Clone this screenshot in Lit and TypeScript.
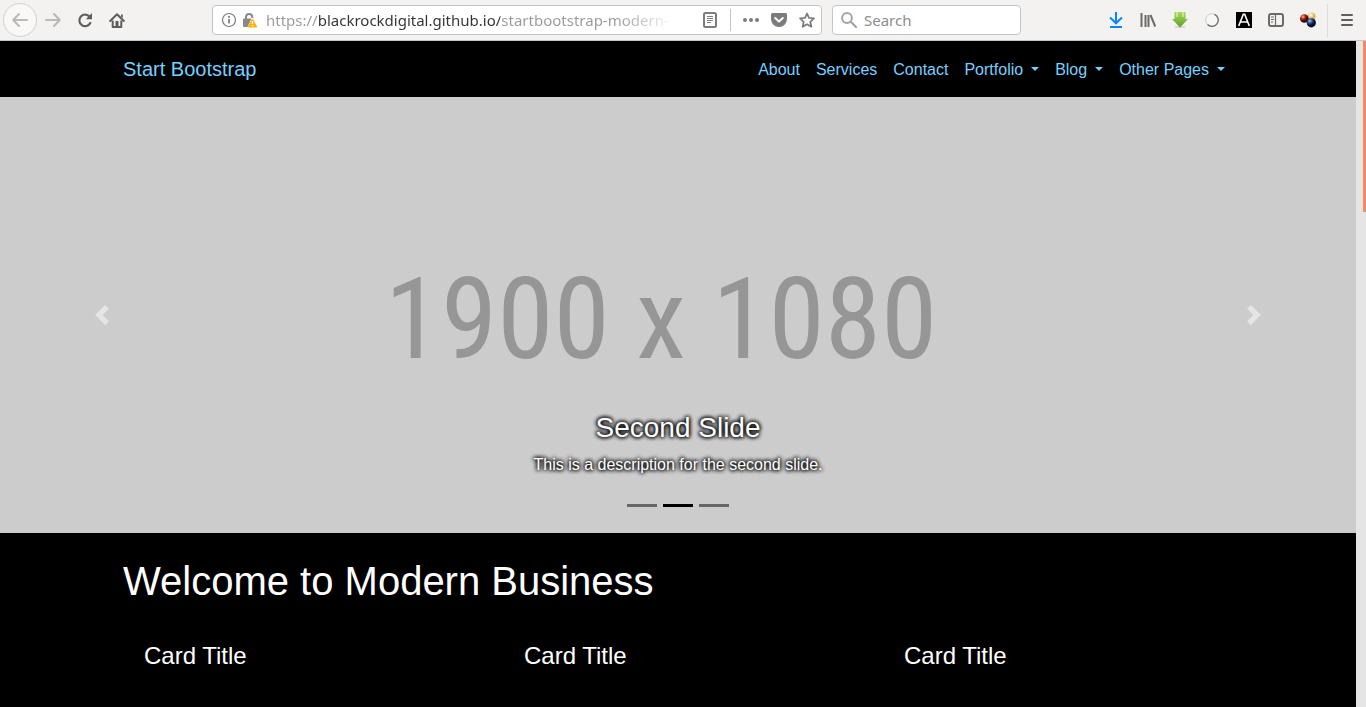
import { LitElement, html, svg, css } from "lit";
import { customElement, state } from "lit/decorators.js";

const icon = (body: unknown, size = 16) => html`
  <svg width=${size} height=${size} viewBox="0 0 ${size} ${size}" fill="none" aria-hidden="true">${body}</svg>
`;

const icons = {
  back: icon(svg`<path d="M15 8H1.5M7 2 1.2 8 7 14" stroke="#bbb9b7" stroke-width="2" stroke-linecap="round" stroke-linejoin="round"/>`),
  forward: icon(svg`<path d="M1 8h13.500M9 2l5.800 6L9 14" stroke="#bbb9b7" stroke-width="2" stroke-linecap="round" stroke-linejoin="round"/>`),
  reload: icon(svg`<path d="M12.600 4.600A5.800 5.800 0 1 0 13.300 11" stroke="#5f5e5d" stroke-width="2.200" stroke-linecap="round"/><path d="M15 1v6.200H8.800z" fill="#5f5e5d"/>`),
  home: icon(svg`<path d="M1.200 9 8 2.200 14.800 9" stroke="#5f5e5d" stroke-width="2" stroke-linecap="round" stroke-linejoin="round"/><path d="M12 2.500h1.800V6L12 4.500z" fill="#5f5e5d"/><path d="M3.700 8.500V15h8.600V8.500" stroke="#5f5e5d" stroke-width="2" stroke-linejoin="round"/><path d="M6.500 14V9h3v5z" fill="#5f5e5d"/>`),
  info: icon(svg`<circle cx="8" cy="8" r="6.500" stroke="#7d7c7b" stroke-width="1.200"/><path d="M8 7v4.500" stroke="#7d7c7b" stroke-width="1.700"/><circle cx="8" cy="4.800" r="1.100" fill="#7d7c7b"/>`),
  lock: icon(svg`<path d="M4 7V4.600a3.200 3.200 0 0 1 6.300 0V6" stroke="#8a8988" stroke-width="2"/><path d="M2 6.500h7.500L5.500 15H2a1 1 0 0 1-1-1V7.500a1 1 0 0 1 1-1z" fill="#8a8988"/><path d="M10.500 7 14.800 15H6.200z" fill="#ffb300" stroke="#ffb300" stroke-width="1" stroke-linejoin="round"/><path d="M10.500 9v3M10.500 13v1.300" stroke="#fff" stroke-width="1.400"/>`),
  reader: icon(svg`<rect x="2" y="1" width="12" height="14" rx="1.500" stroke="#7d7c7b" stroke-width="2"/><path d="M5 4.500h6M5 6.500h6M5 8.500h6M5 10.500h4" stroke="#7d7c7b"/>`),
  dots: icon(svg`<g fill="#7d7c7b"><circle cx="2" cy="8" r="2"/><circle cx="8" cy="8" r="2"/><circle cx="14" cy="8" r="2"/></g>`),
  pocket: icon(svg`<path d="M1.500 1h13A1.500 1.500 0 0 1 16 2.500V7A8 8 0 0 1 0 7V2.500A1.500 1.500 0 0 1 1.500 1z" fill="#7d7c7b"/><path d="M4.200 6 8 9.600 11.800 6" stroke="#fff" stroke-width="2" stroke-linecap="round" stroke-linejoin="round"/>`),
  star: icon(svg`<path d="m8 1.500 2 4.400 4.900.5-3.600 3.400 1 4.900L8 12.300l-4.300 2.400 1-4.900L1.100 6.400 6 5.900z" stroke="#7d7c7b" stroke-width="1.800" stroke-linejoin="round"/>`),
  search: icon(svg`<circle cx="6" cy="6" r="4.900" stroke="#a5a4a3" stroke-width="2"/><path d="m9.800 9.800 5.200 5.200" stroke="#a5a4a3" stroke-width="2.200" stroke-linecap="round"/>`),
  download: icon(svg`<path d="M8 1v10M2.800 6.200 8 11.300l5.200-5.100M3 15h10" stroke="#0a84ff" stroke-width="2" stroke-linecap="square"/>`),
  library: icon(svg`<path d="M1.500 1v14M5.500 3v12M8.500 3v12M10.500 3l4.700 11.500" stroke="#6c6b6a" stroke-width="2"/>`),
  save: icon(svg`
    <defs><linearGradient id="sg" x2="0" y2="1"><stop offset="0" stop-color="#a9dc55"/><stop offset="1" stop-color="#5c9f2a"/></linearGradient></defs>
    <ellipse cx="8" cy="15" rx="6" ry="1" fill="#d6d6d2"/>
    <path d="M2.500 0h2v5h1V0h5v5h1V0h2v7H16l-8 8.500L0 7h2.500z" fill="url(#sg)"/>`),
  ring: icon(svg`<circle cx="8" cy="8" r="6.300" fill="#f7f7f6" stroke="#cfcecd" stroke-width="1"/><path d="M10.500 2.300a6.300 6.300 0 1 1-7 10.200" stroke="#6e6d6c" stroke-width="1.300"/>`),
  letter: icon(svg`<rect width="16" height="16" fill="#000"/><path d="M2.700 14 7.300 2.300h1.400L13.300 14M4.500 10h7" stroke="#fff" stroke-width="1.600"/>`),
  sidebar: icon(svg`<rect x="1" y="2" width="14" height="12" rx="2" stroke="#6c6b6a" stroke-width="2"/><path d="M7.500 2v12" stroke="#6c6b6a" stroke-width="1.200"/><path d="M3 5h3M3 7.500h3M3 10h2" stroke="#6c6b6a"/>`),
  balls: icon(svg`
    <defs>
      <radialGradient id="ry" cx=".4" cy=".3"><stop offset="0" stop-color="#fffbe0"/><stop offset="1" stop-color="#d8b24a"/></radialGradient>
      <radialGradient id="rr" cx=".35" cy=".3"><stop offset="0" stop-color="#ffb0a0"/><stop offset=".5" stop-color="#b8301c"/><stop offset="1" stop-color="#3c0803"/></radialGradient>
      <radialGradient id="rb" cx=".35" cy=".3"><stop offset="0" stop-color="#a8c0f4"/><stop offset=".5" stop-color="#2c4c9c"/><stop offset="1" stop-color="#050a24"/></radialGradient>
    </defs>
    <circle cx="11.500" cy="4.500" r="4" fill="url(#ry)"/><circle cx="4.300" cy="6.500" r="4.300" fill="url(#rr)"/><circle cx="11.300" cy="10.800" r="4.600" fill="url(#rb)"/>`),
  menu: icon(svg`<path d="M3 3h10M3 8h10M3 13h10" stroke="#5f5e5d" stroke-width="2" stroke-linecap="round"/>`),
};

@customElement("browser-toolbar")
class BrowserToolbar extends LitElement {
  static styles = css`
    :host {
      display: flex;
      align-items: center;
      flex: none;
      box-sizing: border-box;
      height: 41px;
      padding: 0 3px;
      background: #f3f2f0;
      border-bottom: 1px solid #c9c7c3;
    }
    button {
      display: flex;
      align-items: center;
      justify-content: center;
      flex: none;
      width: 32px;
      height: 32px;
      padding: 0;
      border: 0;
      background: none;
    }
    svg { display: block; flex: none; }
    .back {
      width: 34px;
      height: 34px;
      border: 1px solid #d2d0cd;
      border-radius: 50%;
      background: #f9f8f7;
    }
    .spacer { flex: 79 79 79px; }
    .field {
      display: flex;
      align-items: center;
      box-sizing: border-box;
      height: 30px;
      min-width: 0;
      border: 1px solid #c8c5c1;
      border-radius: 4px;
      background: #fff;
    }
    .address { flex: 610 610 610px; padding-left: 8px; }
    .address button { width: 28px; height: 28px; }
    .address .identity { width: 16px; margin-right: 5px; }
    .lookup { flex: 189 189 189px; margin-left: 10px; padding: 0 8px; gap: 7px; }
    input {
      flex: 1;
      min-width: 0;
      height: 26px;
      padding: 0;
      border: 0;
      outline: 0;
      background: none;
      font: 15px/20px "Noto Sans", "Open Sans", sans-serif;
      color: #8e8d8c;
    }
    input::placeholder { color: #8e8d8c; opacity: 1; }
    .url {
      margin: 0 16px 0 3px;
      background: linear-gradient(to right, #999 52px, #333 52px 234px, #999 234px 350px, #9990 410px);
      background-clip: text;
      -webkit-background-clip: text;
      color: transparent;
    }
    .rule { width: 1px; height: 22px; margin: 0 6px; background: #c8c5c1; }
    .divider { width: 1px; height: 33px; margin: 0 3px; background: #dddbd8; }
  `;

  render() {
    const tools: [string, unknown][] = [
      ["Downloads", icons.download],
      ["Library", icons.library],
      ["Save page", icons.save],
      ["Status", icons.ring],
      ["Fonts", icons.letter],
      ["Sidebars", icons.sidebar],
      ["Colours", icons.balls],
    ];
    return html`
      <button class="back" aria-label="Back">${icons.back}</button>
      <button aria-label="Forward">${icons.forward}</button>
      <button aria-label="Reload">${icons.reload}</button>
      <button aria-label="Home">${icons.home}</button>
      <div class="spacer"></div>
      <div class="field address">
        <button class="identity" aria-label="Site information">${icons.info}</button>
        <button class="identity" aria-label="Connection">${icons.lock}</button>
        <input class="url" aria-label="Address" value="https://blackrockdigital.github.io/startbootstrap-modern-" />
        <button aria-label="Reader view">${icons.reader}</button>
        <div class="rule"></div>
        <button aria-label="Page actions">${icons.dots}</button>
        <button aria-label="Save to Pocket">${icons.pocket}</button>
        <button aria-label="Bookmark">${icons.star}</button>
      </div>
      <div class="field lookup">
        ${icons.search}
        <input aria-label="Search" placeholder="Search" />
      </div>
      <div class="spacer"></div>
      ${tools.map(([label, glyph]) => html`<button aria-label=${label}>${glyph}</button>`)}
      <div class="divider"></div>
      <button aria-label="Menu">${icons.menu}</button>
    `;
  }
}

@customElement("site-header")
class SiteHeader extends LitElement {
  static styles = css`
    :host { display: block; background: #000; }
    .container {
      display: flex;
      align-items: center;
      justify-content: space-between;
      box-sizing: border-box;
      max-width: 1140px;
      min-height: 56px;
      margin: 0 auto;
      padding: 0 15px;
    }
    a { color: #76d0ff; text-decoration: none; }
    .brand { font-size: 20px; line-height: 30px; }
    .links { display: flex; }
    .links a { padding: 9px 8px 7px; line-height: 24px; }
    .caret {
      display: inline-block;
      margin-left: 8px;
      vertical-align: 4px;
      border: 4px solid transparent;
      border-top-color: currentColor;
      border-bottom: 0;
    }
  `;

  render() {
    const links: [string, boolean][] = [
      ["About", false],
      ["Services", false],
      ["Contact", false],
      ["Portfolio", true],
      ["Blog", true],
      ["Other Pages", true],
    ];
    return html`
      <div class="container">
        <a class="brand" href="#">Start Bootstrap</a>
        <nav class="links">
          ${links.map(([label, menu]) => html`<a href="#">${label}${menu ? html`<span class="caret"></span>` : ""}</a>`)}
        </nav>
      </div>
    `;
  }
}

@customElement("slide-show")
class SlideShow extends LitElement {
  @state() private active = 1;

  static styles = css`
    :host { display: block; position: relative; background: #ccc; }
    .picture {
      display: flex;
      align-items: center;
      justify-content: center;
      box-sizing: border-box;
      height: 436px;
      padding: 8px 34px 0 0;
      color: #969696;
      font: 114px/1 "Roboto Condensed", "Liberation Sans Narrow", "Liberation Sans", sans-serif;
      white-space: nowrap;
    }
    .caption {
      position: absolute;
      inset: auto 15% 20px;
      padding: 20px 0;
      text-align: center;
      color: #fff;
      text-shadow: 0 0 4px #000, 0 0 4px #000, 0 0 4px #000;
    }
    h3 { margin: 0 0 8px; font-size: 28px; line-height: 34px; font-weight: 400; }
    p { margin: 0 0 16px; line-height: 24px; }
    .control {
      position: absolute;
      top: 0;
      bottom: 0;
      width: 15%;
      display: flex;
      align-items: center;
      justify-content: center;
      padding: 0;
      border: 0;
      background: none;
      opacity: 0.5;
    }
    .prev { left: 0; }
    .next { right: 0; }
    .marks {
      position: absolute;
      inset: auto 0 26px;
      display: flex;
      justify-content: center;
      gap: 6px;
    }
    .mark { width: 30px; height: 3px; padding: 0; border: 0; background: #666; }
    .current { background: #000; }
  `;

  private go(step: number) {
    this.active = (this.active + step + 3) % 3;
  }

  render() {
    const names = ["first", "second", "third"];
    const name = names[this.active];
    const title = name[0].toUpperCase() + name.slice(1);
    return html`
      <div class="picture">1900 x 1080</div>
      <div class="caption">
        <h3>${title} Slide</h3>
        <p>This is a description for the ${name} slide.</p>
      </div>
      <button class="control prev" aria-label="Previous" @click=${() => this.go(-1)}>
        <svg width="20" height="20" viewBox="0 0 8 8" fill="#fff"><path d="M5.250 0l-4 4 4 4 1.500-1.500-2.500-2.500 2.500-2.500-1.500-1.500z"/></svg>
      </button>
      <button class="control next" aria-label="Next" @click=${() => this.go(1)}>
        <svg width="20" height="20" viewBox="0 0 8 8" fill="#fff"><path d="M2.750 0l-1.500 1.500 2.500 2.500-2.500 2.500 1.500 1.500 4-4-4-4z"/></svg>
      </button>
      <div class="marks">
        ${names.map((n, i) => html`<button class="mark ${i === this.active ? "current" : ""}" aria-label="Show ${n} slide" @click=${() => (this.active = i)}></button>`)}
      </div>
    `;
  }
}

@customElement("app-root")
class AppRoot extends LitElement {
  static styles = css`
    :host {
      display: flex;
      flex-direction: column;
      height: 100vh;
      overflow: hidden;
      font: 16px/24px "Liberation Sans", Arial, sans-serif;
    }
    .viewport { display: flex; flex: 1; min-height: 0; }
    .page { flex: 1; min-width: 0; overflow: hidden; background: #000; color: #fff; }
    .container { box-sizing: border-box; max-width: 1140px; margin: 0 auto; padding: 0 15px; }
    h1 { margin: 24px 0; font-size: 40px; line-height: 48px; font-weight: 400; }
    .cards { display: grid; grid-template-columns: repeat(3, 1fr); gap: 30px; }
    .card { border: 1px solid #000; }
    h4 { margin: 0; padding: 12px 20px; font-size: 24px; line-height: 28px; font-weight: 400; }
    .scrollbar { flex: none; width: 10px; background: #e5e5e5; }
    .thumb { width: 3px; height: 171px; margin-left: auto; background: #f08c64; border-radius: 0 0 0 1px; }
  `;

  render() {
    return html`
      <browser-toolbar></browser-toolbar>
      <div class="viewport">
        <div class="page">
          <site-header></site-header>
          <slide-show></slide-show>
          <main class="container">
            <h1>Welcome to Modern Business</h1>
            <div class="cards">
              ${[1, 2, 3].map(() => html`<section class="card"><h4>Card Title</h4></section>`)}
            </div>
          </main>
        </div>
        <div class="scrollbar"><div class="thumb"></div></div>
      </div>
    `;
  }
}
